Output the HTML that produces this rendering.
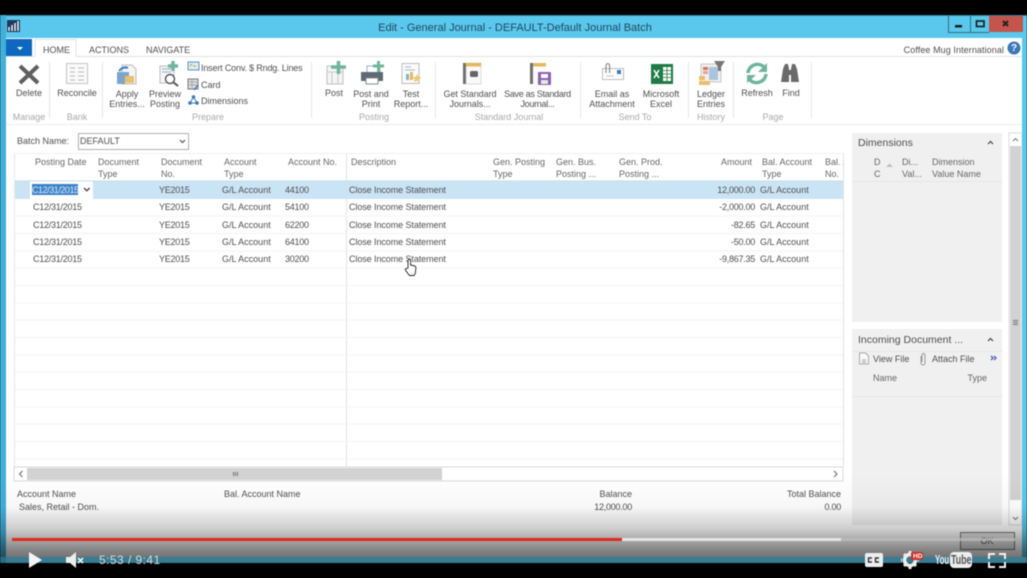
<!DOCTYPE html>
<html><head><meta charset="utf-8"><style>
html,body{margin:0;padding:0;background:#000}
#p{position:relative;width:1027px;height:578px;overflow:hidden;background:#000;font-family:"Liberation Sans",sans-serif;font-size:9px;color:#4f4f4f}
#f{position:absolute;left:0;top:0;width:1027px;height:578px;filter:blur(.45px)}
.t{position:absolute;white-space:nowrap;line-height:11px;margin-top:1px}
.c{transform:translateX(-50%);text-align:center}
.r{transform:translateX(-100%);text-align:right}
.g{color:#a8a8a8}
.h{color:#666;line-height:12px;margin-top:0}
.n{letter-spacing:-.25px}
svg{position:absolute;left:0;top:0}
</style></head><body><div id="p"><div id="f">
<svg width="1027" height="578" viewBox="0 0 1027 578">
<rect y="15" width="1027" height="548" fill="#5ac8ec"/>
<rect y="15" width="1027" height="1" fill="#3b7f99"/>
<rect x="0" y="15" width="6" height="548" fill="#41afd8"/>
<rect x="6" y="38" width="1016" height="519" fill="#fff"/>
<!-- title icon -->
<rect x="7" y="20" width="13" height="12" fill="#1d3a5e"/>
<path d="M9 31v-4M12 31v-6M15 31v-8M18 31v-10" stroke="#fff" stroke-width="1.4"/>
<!-- window buttons -->
<path d="M948.500 16V32.500H989M970.500 16V32.500" fill="none" stroke="#2f6d85"/>
<rect x="989" y="16" width="34" height="16" fill="#c4554c"/>
<rect x="955" y="25" width="7" height="2.500" fill="#1a1a1a"/>
<rect x="976.500" y="21" width="7.500" height="5.500" fill="none" stroke="#1a1a1a" stroke-width="1.600"/>
<path d="M1003 21l5 5M1008 21l-5 5" stroke="#222" stroke-width="2"/>
<!-- tabs -->
<rect x="6" y="39" width="26" height="18" fill="#0e68c0"/>
<path d="M17 47h6l-3 3z" fill="#fff"/>
<path d="M35 56.500V39.500H76V56.500" fill="#fff" stroke="#e2e2e2"/>
<path d="M6 56.500H35M76 56.500H1022" stroke="#e2e2e2"/>
<rect x="6" y="124" width="1016" height="1" fill="#ececec"/>
<!-- help -->
<circle cx="1014" cy="48" r="6.500" fill="#3a78b8"/>
<!-- ribbon separators -->
<path d="M49.500 62v56M102.500 62v56M311.500 62v56M435.500 62v56M580.500 62v56M688.500 62v56M733.500 62v56M811.500 62v56" stroke="#e6e6e6"/>
<!-- delete -->
<path d="M20 66L38 83M38 66L20 83" stroke="#5f5f5f" stroke-width="4"/>
<!-- reconcile -->
<rect x="66.500" y="63.500" width="21" height="20" fill="#fafafa" stroke="#c4c4c4"/>
<path d="M70 68h5M78 68h6M70 72h5M78 72h6M70 76h5M78 76h6M70 80h5M78 80h6" stroke="#b8b8b8"/>
<!-- apply -->
<path d="M122 65h10l4 4v15h-14z" fill="#f4f4f4" stroke="#bcbcbc"/>
<path d="M117 72h12v7h-12zM117 79h8v5h-8z" fill="#7aa6c8"/>
<rect x="125" y="76" width="9" height="7" fill="#ecbf6c"/>
<path d="M119 71q4-5 9-3" stroke="#3a7fc0" stroke-width="2" fill="none"/>
<!-- preview -->
<rect x="160" y="66" width="14" height="17" fill="#f6f6f6" stroke="#bcbcbc"/>
<path d="M162 69h9M162 72h9" stroke="#8cb0cc"/>
<path d="M168 66h10M173 61v10" stroke="#6fb59c" stroke-width="3.500"/>
<circle cx="170" cy="79" r="4.500" fill="#fff" stroke="#555" stroke-width="1.400"/>
<path d="M173 82l5 4" stroke="#555" stroke-width="2"/>
<!-- small icons -->
<rect x="188" y="62" width="11" height="8" fill="#dcecf6" stroke="#5a92c4"/>
<path d="M190 66l2-2M196 66h-3" stroke="#d8912c"/>
<rect x="188" y="79" width="10" height="10" fill="#ddd" stroke="#777"/>
<path d="M189 82h8M189 85h8M192 79v10" stroke="#999" stroke-width=".7"/>
<path d="M194 90l4-5" stroke="#3a78b8" stroke-width="1.400"/>
<circle cx="193.500" cy="97" r="1.800" fill="#3a78b8"/><circle cx="190" cy="103" r="1.800" fill="#3a78b8"/><circle cx="197" cy="103" r="1.800" fill="#3a78b8"/>
<path d="M193.500 97L190 103M193.500 97L197 103M190 103h7" stroke="#3a78b8"/>
<!-- post -->
<rect x="327" y="66" width="16" height="18" fill="#f5f5f5" stroke="#bfbfbf"/>
<path d="M327 72h16M332 72v12M338 72v12" stroke="#c8c8c8"/>
<path d="M331 67h15M338.500 61v13" stroke="#6fb59c" stroke-width="3.500"/>
<!-- post print -->
<rect x="367" y="66" width="13" height="7" fill="#fff" stroke="#9cb0c0"/>
<rect x="361" y="72" width="22" height="9" fill="#5e6b76"/>
<rect x="366" y="78" width="12" height="6" fill="#fff" stroke="#888"/>
<path d="M373 66h11M378.500 61v11" stroke="#6fb59c" stroke-width="3"/>
<!-- test report -->
<rect x="402" y="63.500" width="17" height="20" fill="#fbfbfb" stroke="#bcbcbc"/>
<path d="M405 67h6M405 70h10" stroke="#9fb6cc"/>
<rect x="406" y="74" width="3" height="6" fill="#8ab0c8"/><rect x="410" y="72" width="3" height="8" fill="#e4b860"/>
<path d="M417 74l1.500 3 3 .3-2.200 2 .7 3-3-1.500-3 1.500.7-3-2.200-2 3-.3z" fill="#ecc878"/>
<!-- get std -->
<rect x="463" y="63" width="18" height="21" fill="#6f6f6f"/>
<rect x="466" y="63" width="15" height="21" fill="#fafafa" stroke="#bbb" stroke-width=".5"/>
<rect x="466" y="63" width="15" height="3.500" fill="#e6b85c"/>
<rect x="470" y="71" width="8" height="6" rx="1.500" fill="#666"/>
<!-- save std -->
<rect x="530" y="63" width="16" height="21" fill="#6f6f6f"/>
<rect x="533" y="63" width="13" height="21" fill="#fafafa"/>
<rect x="533" y="63" width="13" height="3.500" fill="#e6b85c"/>
<rect x="538" y="72" width="13" height="13" rx="1" fill="#8d5fb0"/>
<rect x="541" y="74" width="7" height="4" fill="#fff"/><rect x="541" y="80" width="7" height="4" fill="#ded"/>
<!-- email -->
<rect x="602.500" y="68.500" width="21" height="11" fill="#fdfdfd" stroke="#bdbdbd"/>
<rect x="617" y="70" width="4" height="4" fill="#3a78b8"/>
<path d="M606 76h8" stroke="#c8c8c8"/>
<path d="M606 73V65.500a1.800 1.800 0 0 1 3.600 0V73" fill="none" stroke="#8c8c8c" stroke-width="1.200"/>
<!-- excel -->
<rect x="651" y="64" width="22" height="20" fill="#1f7a45"/>
<rect x="663" y="67" width="8" height="14" fill="#fff"/>
<path d="M663 70.500h8M663 74h8M663 77.500h8M667 67v14" stroke="#1f7a45" stroke-width=".8"/>
<path d="M654 70l5 8M659 70l-5 8" stroke="#fff" stroke-width="1.600"/>
<!-- ledger -->
<rect x="701" y="64" width="20" height="18" fill="#f0f0f0" stroke="#c8c8c8"/>
<path d="M709 67h9v13h-9z" fill="#a9c4dc"/>
<path d="M703 67h5v3h-5z" fill="#d8735c"/><path d="M703 71h5v3h-5z" fill="#d8735c" opacity=".6"/>
<rect x="699" y="76" width="6" height="4" fill="#ecbe6c"/><rect x="699" y="81" width="11" height="4" fill="#ecbe6c"/>
<path d="M714 61h11l-4 6v4h-3v-4z" fill="#777"/>
<!-- refresh -->
<path d="M748 73a9.500 9.500 0 0 1 16-6" fill="none" stroke="#6fb59c" stroke-width="3.500"/>
<path d="M767 63v9h-9z" fill="#6fb59c"/>
<path d="M766 74a9.500 9.500 0 0 1-16 6" fill="none" stroke="#6fb59c" stroke-width="3.500"/>
<path d="M747 83v-8h9z" fill="#6fb59c"/>
<!-- find -->
<path d="M781 82l2-13 2-5h3l1 5v13zM791 82v-13l1-5h3l2 5 2 13z" fill="#6a6a6a"/>
<rect x="788" y="70" width="4" height="5" fill="#6a6a6a"/>
<!-- batch -->
<rect x="78.500" y="133.500" width="110" height="16" fill="#fff" stroke="#b0b0b0"/>
<path d="M180 140l2.500 2.500 2.500-2.500" fill="none" stroke="#555" stroke-width="1.200"/>
<!-- grid -->
<path d="M14.500 153V467" stroke="#e8e8e8"/>
<path d="M843.500 153V467" stroke="#e2e2e2"/>
<path d="M346.500 153V467" stroke="#e2e2e2"/>
<path d="M14 153.500H843" stroke="#f2f2f2"/>
<rect x="15" y="181" width="828" height="18" fill="#cae4f5"/>
<rect x="30" y="181" width="63" height="18" fill="#fff"/>
<rect x="32" y="184" width="46" height="11" fill="#3d82c8"/>
<path d="M84 188l2.800 2.800 2.800-2.800" fill="none" stroke="#444" stroke-width="1.300"/>
<path d="M15 216H843M15 233.500H843M15 251H843M15 268H843M15 285.500H843M15 303H843M15 320H843M15 337.500H843M15 355H843M15 372H843M15 389.500H843M15 407H843M15 424H843M15 441.500H843M15 459H843" stroke="#f4f4f4"/>
<path d="M15 181H843" stroke="#c4dcec"/>
<!-- h scrollbar -->
<rect x="14" y="467" width="829" height="14" fill="#fff" stroke="#d8d8d8"/>
<rect x="27" y="468" width="415" height="12" fill="#d2d2d2"/>
<path d="M22.500 471l-3 3 3 3M834 471l3 3-3 3" fill="none" stroke="#666"/>
<path d="M233.500 472v4M235.500 472v4M237.500 472v4" stroke="#777"/>
<!-- side panels -->
<rect x="852" y="133" width="150" height="189" fill="#f0f0f0"/>
<rect x="852" y="329" width="150" height="196" fill="#f0f0f0"/>
<path d="M852 181.500H1002M852 351.500H1002M852 396.500H1002" stroke="#e6e6e6"/>
<path d="M988 144l2.500-2.500L993 144M988 341l2.500-2.500L993 341" fill="none" stroke="#444" stroke-width="1.200"/>
<path d="M886 167l3.500-3.500 3.500 3.500z" fill="#c0c0c0"/>
<path d="M991 356l2 2-2 2M994 356l2 2-2 2" fill="none" stroke="#2b3fa8" stroke-width="1.100"/>
<path d="M859.500 353h6l3 3v8h-9z" fill="#fafafa" stroke="#a8a8a8"/>
<path d="M862 359h4v5h-4z" fill="#ccc"/>
<path d="M921 356v7a2 2 0 0 0 4 0v-8a1.300 1.300 0 0 0-3 0v7" fill="none" stroke="#999"/>
<!-- v scrollbar -->
<rect x="1009" y="133" width="13" height="392" fill="#fff" stroke="#dcdcdc"/>
<rect x="1010" y="146" width="11" height="354" fill="#d2d2d2"/>
<path d="M1013 141l2.500-2.500 2.500 2.500M1013 517l2.500 2.500 2.500-2.500" fill="none" stroke="#777"/>
<path d="M1013 320.500h5M1013 322.500h5M1013 324.500h5" stroke="#777"/>
<rect x="1022" y="125" width="5" height="432" fill="#5ac8ec"/>
<!-- OK -->
<rect x="960.500" y="532.500" width="54" height="17" fill="#e6e6e6" stroke="#777"/>
</svg>

<div class="t c" style="left:515px;top:21px;font-size:11px;color:#1f4860;line-height:13px">Edit - General Journal - DEFAULT-Default Journal Batch</div>

<div class="t" style="left:43px;top:44px">HOME</div>
<div class="t" style="left:89px;top:44px">ACTIONS</div>
<div class="t" style="left:146px;top:44px">NAVIGATE</div>
<div class="t r" style="left:1004px;top:44px;letter-spacing:.08px">Coffee Mug International</div>
<div class="t c" style="left:1014px;top:42px;color:#fff;font-weight:bold;font-size:10px">?</div>

<div class="t c" style="left:29px;top:87px">Delete</div>
<div class="t c" style="left:77px;top:87px">Reconcile</div>
<div class="t c" style="left:127px;top:88px;line-height:10px">Apply<br>Entries...</div>
<div class="t c" style="left:165px;top:88px;line-height:10px">Preview<br>Posting</div>
<div class="t" style="left:201px;top:62px;letter-spacing:-.17px">Insert Conv. $ Rndg. Lines</div>
<div class="t" style="left:201px;top:79px">Card</div>
<div class="t" style="left:201px;top:95px">Dimensions</div>
<div class="t c" style="left:334px;top:87px">Post</div>
<div class="t c" style="left:371px;top:88px;line-height:10px">Post and<br>Print</div>
<div class="t c" style="left:411px;top:88px;line-height:10px">Test<br>Report...</div>
<div class="t c" style="left:470px;top:88px;line-height:10px;letter-spacing:-.05px">Get Standard<br>Journals...</div>
<div class="t c" style="left:537.500px;top:88px;line-height:10px;letter-spacing:-.3px">Save as Standard<br>Journal...</div>
<div class="t c" style="left:612px;top:88px;line-height:10px">Email as<br>Attachment</div>
<div class="t c" style="left:661px;top:88px;line-height:10px">Microsoft<br>Excel</div>
<div class="t c" style="left:711px;top:88px;line-height:10px">Ledger<br>Entries</div>
<div class="t c" style="left:757px;top:87px">Refresh</div>
<div class="t c" style="left:791px;top:87px">Find</div>

<div class="t c g" style="left:29px;top:111px">Manage</div>
<div class="t c g" style="left:77px;top:111px">Bank</div>
<div class="t c g" style="left:208px;top:111px">Prepare</div>
<div class="t c g" style="left:374px;top:111px">Posting</div>
<div class="t c g" style="left:509px;top:111px">Standard Journal</div>
<div class="t c g" style="left:635px;top:111px">Send To</div>
<div class="t c g" style="left:711px;top:111px">History</div>
<div class="t c g" style="left:773px;top:111px">Page</div>

<div class="t" style="left:17px;top:135px">Batch Name:</div>
<div class="t" style="left:80px;top:135px">DEFAULT</div>

<div class="t h" style="left:35px;top:156px">Posting Date</div>
<div class="t h" style="left:98px;top:156px">Document<br>Type</div>
<div class="t h" style="left:161px;top:156px">Document<br>No.</div>
<div class="t h" style="left:224px;top:156px">Account<br>Type</div>
<div class="t h" style="left:288px;top:156px">Account No.</div>
<div class="t h" style="left:351px;top:156px">Description</div>
<div class="t h" style="left:493px;top:156px">Gen. Posting<br>Type</div>
<div class="t h" style="left:556px;top:156px">Gen. Bus.<br>Posting ...</div>
<div class="t h" style="left:619px;top:156px">Gen. Prod.<br>Posting ...</div>
<div class="t h r" style="left:752px;top:156px">Amount</div>
<div class="t h" style="left:762px;top:156px">Bal. Account<br>Type</div>
<div class="t h" style="left:825px;top:156px;width:18px;overflow:hidden">Bal. A<br>No.</div>

<div class="t" style="left:32px;top:183.500px;color:#dbeaf8;letter-spacing:-.45px">C12/31/2015</div>
<div class="t n" style="left:159px;top:183.500px">YE2015</div><div class="t" style="left:222px;top:183.500px">G/L Account</div><div class="t n" style="left:285px;top:183.500px">44100</div><div class="t" style="left:349px;top:183.500px;letter-spacing:-.08px">Close Income Statement</div><div class="t r n" style="left:755px;top:183.500px">12,000.00</div><div class="t" style="left:760px;top:183.500px">G/L Account</div>

<div class="t n" style="left:33px;top:201px">C12/31/2015</div><div class="t n" style="left:159px;top:201px">YE2015</div><div class="t" style="left:222px;top:201px">G/L Account</div><div class="t n" style="left:285px;top:201px">54100</div><div class="t" style="left:349px;top:201px;letter-spacing:-.08px">Close Income Statement</div><div class="t r n" style="left:755px;top:201px">-2,000.00</div><div class="t" style="left:760px;top:201px">G/L Account</div>

<div class="t n" style="left:33px;top:218.500px">C12/31/2015</div><div class="t n" style="left:159px;top:218.500px">YE2015</div><div class="t" style="left:222px;top:218.500px">G/L Account</div><div class="t n" style="left:285px;top:218.500px">62200</div><div class="t" style="left:349px;top:218.500px;letter-spacing:-.08px">Close Income Statement</div><div class="t r n" style="left:755px;top:218.500px">-82.65</div><div class="t" style="left:760px;top:218.500px">G/L Account</div>

<div class="t n" style="left:33px;top:236px">C12/31/2015</div><div class="t n" style="left:159px;top:236px">YE2015</div><div class="t" style="left:222px;top:236px">G/L Account</div><div class="t n" style="left:285px;top:236px">64100</div><div class="t" style="left:349px;top:236px;letter-spacing:-.08px">Close Income Statement</div><div class="t r n" style="left:755px;top:236px">-50.00</div><div class="t" style="left:760px;top:236px">G/L Account</div>

<div class="t n" style="left:33px;top:253px">C12/31/2015</div><div class="t n" style="left:159px;top:253px">YE2015</div><div class="t" style="left:222px;top:253px">G/L Account</div><div class="t n" style="left:285px;top:253px">30200</div><div class="t" style="left:349px;top:253px;letter-spacing:-.08px">Close Income Statement</div><div class="t r n" style="left:755px;top:253px">-9,867.35</div><div class="t" style="left:760px;top:253px">G/L Account</div>

<div class="t" style="left:858px;top:136px;font-size:10.500px;line-height:12px">Dimensions</div>
<div class="t h" style="left:874px;top:156px">D<br>C</div>
<div class="t h" style="left:902px;top:156px">Di...<br>Val...</div>
<div class="t h" style="left:932px;top:156px">Dimension<br>Value Name</div>
<div class="t" style="left:858px;top:333px;font-size:10.500px;line-height:12px">Incoming Document ...</div>
<div class="t" style="left:873px;top:353px">View File</div>
<div class="t" style="left:932px;top:353px">Attach File</div>
<div class="t h" style="left:873px;top:372px">Name</div>
<div class="t h r" style="left:987px;top:372px">Type</div>

<div class="t" style="left:17px;top:488px">Account Name</div>
<div class="t" style="left:224px;top:488px">Bal. Account Name</div>
<div class="t r" style="left:632px;top:488px">Balance</div>
<div class="t r" style="left:841px;top:488px">Total Balance</div>
<div class="t" style="left:19px;top:501px">Sales, Retail - Dom.</div>
<div class="t r n" style="left:632px;top:501px">12,000.00</div>
<div class="t r n" style="left:841px;top:501px">0.00</div>
<div class="t c" style="left:987px;top:535px;color:#555">OK</div>

<!-- cursor -->
<svg width="1027" height="578" viewBox="0 0 1027 578">
<path d="M408 268v-7.500a1.300 1.300 0 0 1 2.600 0V265l4.500 1 .8 1.500-.6 6-1.300 2h-4.500l-3.800-5-.4-1.500z" fill="#fff" stroke="#222" stroke-width=".9"/>
</svg>

<!-- gradient overlay -->
<div style="position:absolute;left:0;top:476px;width:1027px;height:81px;background:linear-gradient(to bottom,rgba(0,0,0,0) 0%,rgba(0,0,0,.03) 38%,rgba(0,0,0,.2) 66%,rgba(0,0,0,.48) 91%,rgba(0,0,0,.55) 100%)"></div>
<div style="position:absolute;left:0;top:557px;width:1027px;height:6px;background:rgba(0,0,0,.38)"></div>

<!-- player -->
<svg width="1027" height="578" viewBox="0 0 1027 578">
<rect x="12" y="538" width="1003" height="3" fill="#bdbdbd" opacity=".7"/>
<rect x="622" y="538" width="219" height="3" fill="#e4e4e4"/>
<rect x="12" y="538" width="610" height="3" fill="#e3281c"/>
<path d="M29 552l13 8-13 8z" fill="#f4f4f4"/>
<path d="M66 557h4l6-5v16l-6-5h-4z" fill="#eee"/>
<path d="M78 558l5 5M83 558l-5 5" stroke="#eee" stroke-width="1.700"/>
<rect x="865" y="553" width="18" height="14" rx="2" fill="#eee"/>
<path d="M872 558h-3.500v4h3.500M879 558h-3.500v4h3.500" fill="none" stroke="#333" stroke-width="1.400"/>
<circle cx="910" cy="560" r="5.500" fill="none" stroke="#eee" stroke-width="3.500"/>
<path d="M910 551v4M910 565v4M902 560h-1M918 560h1M904 554l2 2M916 566l-2-2M904 566l2-2" stroke="#eee" stroke-width="3"/>
<rect x="911" y="552" width="12" height="8" rx="1.500" fill="#c9302a"/>
<rect x="950" y="552" width="22" height="16" rx="4" fill="#eee"/>
<path d="M989 559v-5h6M999 554h6v5M1005 562v5h-6M995 567h-6v-5" fill="none" stroke="#f2f2f2" stroke-width="2"/>
</svg>
<div class="t" style="left:99px;top:552px;font-size:12px;line-height:14px;color:#d8d8d8;letter-spacing:.45px">5:53 / 9:41</div>
<div class="t" style="left:913px;top:551.500px;font-size:6.500px;line-height:8px;color:#fff;font-weight:bold">HD</div>
<div class="t" style="left:935px;top:551px;font-size:13px;line-height:16px;color:#eee;font-weight:bold;transform:scaleX(.6);transform-origin:left">You</div>
<div class="t" style="left:951px;top:551px;font-size:13px;line-height:16px;color:#555;font-weight:bold;transform:scaleX(.68);transform-origin:left">Tube</div>
</div></div></body></html>
